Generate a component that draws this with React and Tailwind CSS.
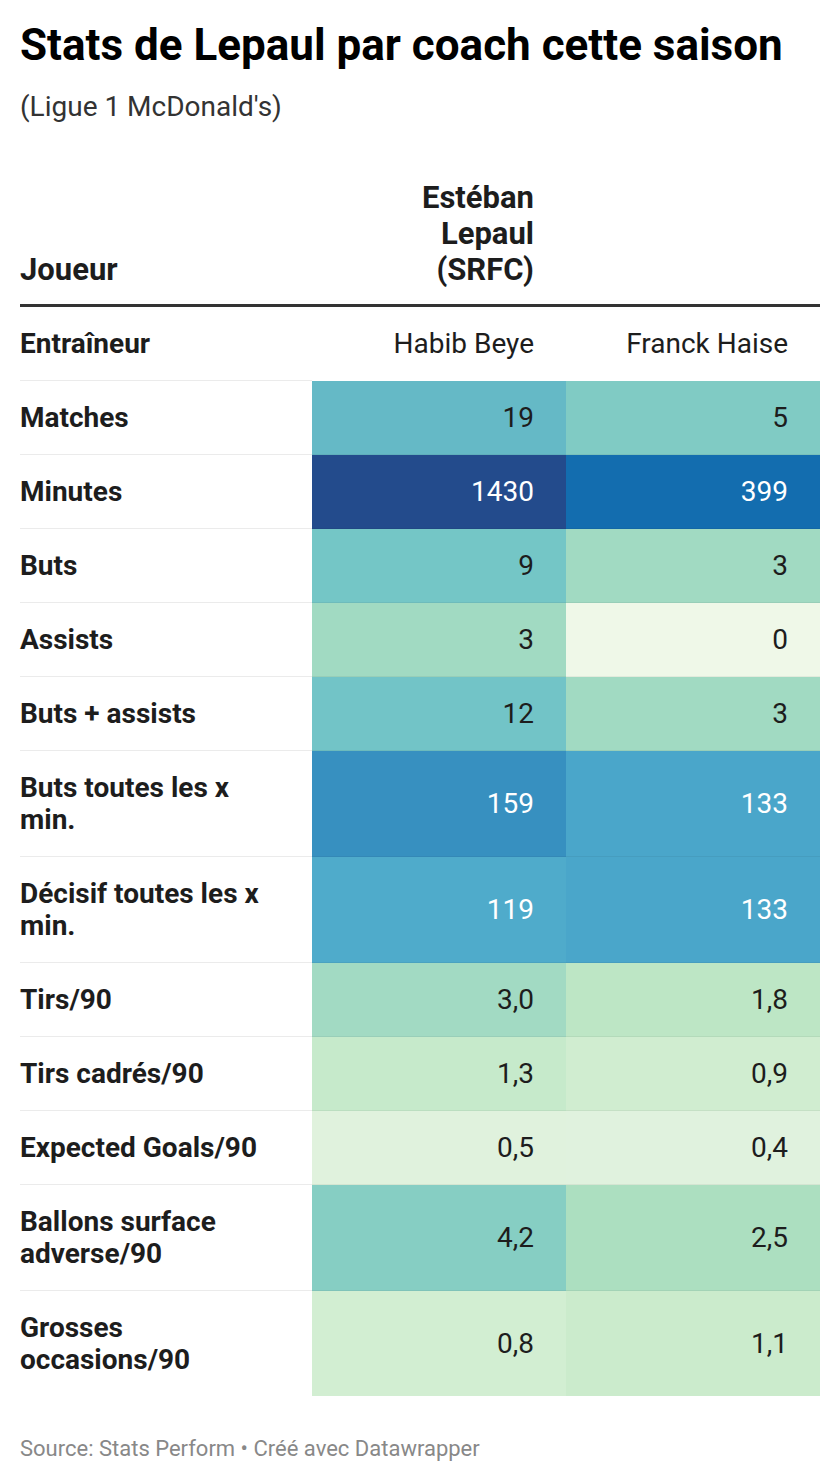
import React from 'react'

const rows = [
  { label: ['Matches'], a: '19', b: '5', ca: 'bg-[#65b9c6]', cb: 'bg-[#80cbc4]' },
  { label: ['Minutes'], a: '1430', b: '399', ca: 'bg-[#234b8c]', cb: 'bg-[#136daf]', wa: true, wb: true },
  { label: ['Buts'], a: '9', b: '3', ca: 'bg-[#74c6c6]', cb: 'bg-[#a1dac2]' },
  { label: ['Assists'], a: '3', b: '0', ca: 'bg-[#a1dac2]', cb: 'bg-[#eff8e8]' },
  { label: ['Buts + assists'], a: '12', b: '3', ca: 'bg-[#72c4c7]', cb: 'bg-[#a1dac2]' },
  { label: ['Buts toutes les x', 'min.'], a: '159', b: '133', ca: 'bg-[#3790c0]', cb: 'bg-[#4aa6ca]', wa: true, wb: true },
  { label: ['Décisif toutes les x', 'min.'], a: '119', b: '133', ca: 'bg-[#4fabcb]', cb: 'bg-[#4aa6ca]', wa: true, wb: true },
  { label: ['Tirs/90'], a: '3,0', b: '1,8', ca: 'bg-[#a2dac3]', cb: 'bg-[#bde6c5]' },
  { label: ['Tirs cadrés/90'], a: '1,3', b: '0,9', ca: 'bg-[#c6eacb]', cb: 'bg-[#d0edd0]' },
  { label: ['Expected Goals/90'], a: '0,5', b: '0,4', ca: 'bg-[#e0f2dd]', cb: 'bg-[#e0f2de]' },
  { label: ['Ballons surface', 'adverse/90'], a: '4,2', b: '2,5', ca: 'bg-[#86cec3]', cb: 'bg-[#acdfc0]' },
  { label: ['Grosses', 'occasions/90'], a: '0,8', b: '1,1', ca: 'bg-[#d2eed2]', cb: 'bg-[#cbebcc]', last: true },
]

const App = () => {
  return (
    <div className="w-[840px] min-h-[1482px] bg-white px-5 pt-[22px] font-['Roboto',sans-serif] text-[#1d1d1d]">
      <h1 className="text-[44px] leading-[46px] font-bold text-black">
        Stats de Lepaul par coach cette saison
      </h1>
      <p className="mt-[24px] text-[28px] leading-[30px] text-[#333]">(Ligue 1 McDonald's)</p>

      <div className="mt-[58px] grid grid-cols-[292px_254px_254px]">
        {/* header */}
        <div className="flex items-end pb-[16px] text-[31px] leading-[36px] font-bold text-[#1d1d1d]">Joueur</div>
        <div className="flex items-end justify-end pr-8 pb-[16px] text-right text-[31px] leading-[36px] font-bold text-[#1d1d1d]">
          Estéban<br />Lepaul<br />(SRFC)
        </div>
        <div className="pb-[16px]"></div>
        <div className="col-span-3 h-[3px] bg-[#333]"></div>

        <div className="flex h-[74px] items-center border-b border-[#ebebeb] text-[28px] font-bold">Entraîneur</div>
        <div className="flex h-[74px] items-center justify-end pr-8 text-[28px]">Habib Beye</div>
        <div className="flex h-[74px] items-center justify-end pr-8 text-[28px]">Franck Haise</div>

        {rows.map((r, i) => {
          const h = r.label.length > 1 ? (r.last ? 'h-[105px]' : 'h-[106px]') : 'h-[74px]'
          return (
            <React.Fragment key={i}>
              <div className={`flex ${h} items-center text-[28px] leading-[32px] font-bold ${r.last ? '' : 'border-b border-[#ebebeb]'}`}>
                <div>
                  {r.label.map((l, j) => (
                    <div key={j}>{l}</div>
                  ))}
                </div>
              </div>
              <div className={`flex ${h} items-center justify-end pr-8 text-[28px] ${r.ca} ${r.wa ? 'text-white' : 'text-[#1d1d1d]'} ${r.last ? '' : 'border-b border-black/5'}`}>
                {r.a}
              </div>
              <div className={`flex ${h} items-center justify-end pr-8 text-[28px] ${r.cb} ${r.wb ? 'text-white' : 'text-[#1d1d1d]'} ${r.last ? '' : 'border-b border-black/5'}`}>
                {r.b}
              </div>
            </React.Fragment>
          )
        })}
      </div>

      <p className="mt-[40px] text-[22px] leading-[26px] text-[#888]">
        Source: Stats Perform • Créé avec Datawrapper
      </p>
    </div>
  )
}

export default App
